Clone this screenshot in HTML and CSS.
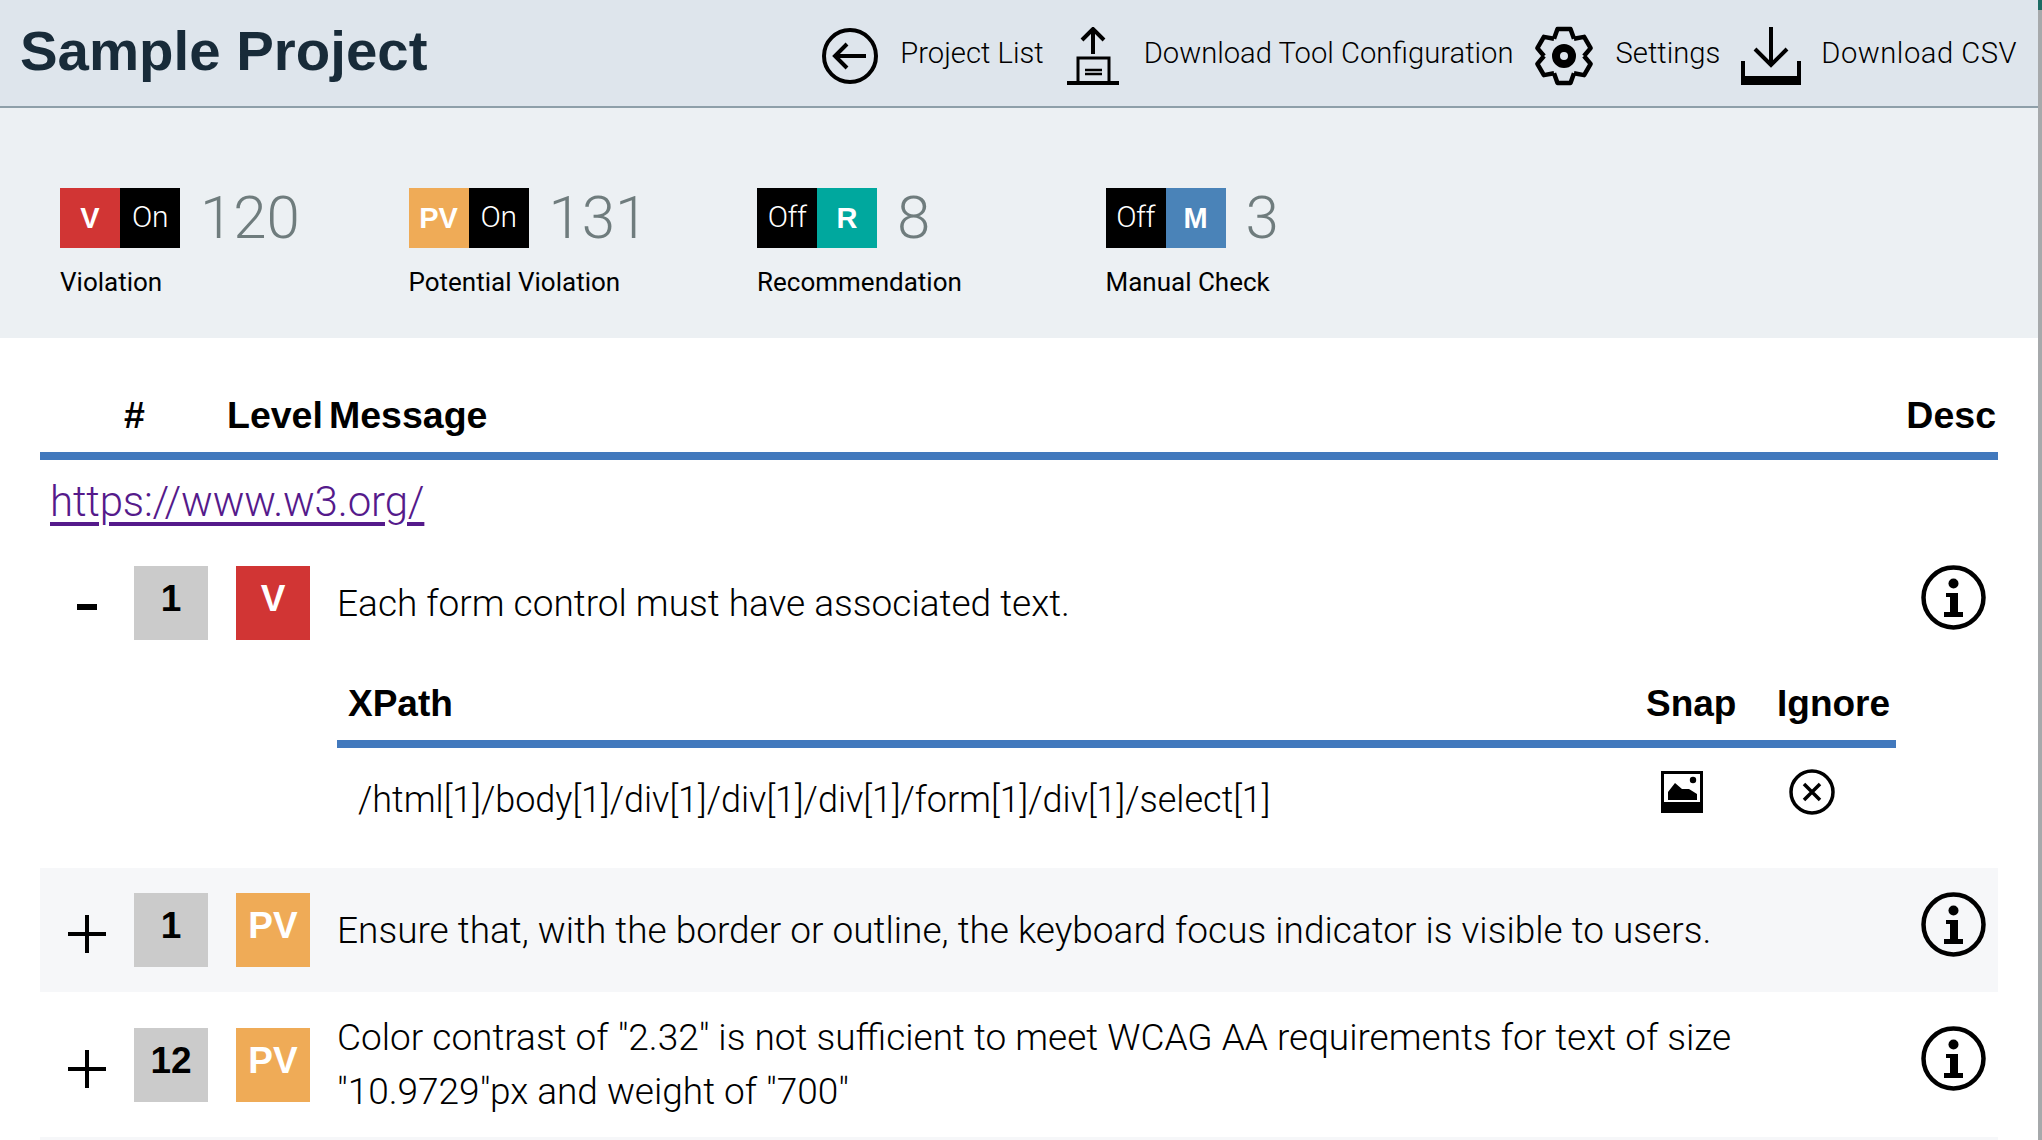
FILE: index.html
```html
<!DOCTYPE html>
<html lang="en">

<head>
    <meta charset="UTF-8">
    <meta name="viewport" content="width=device-width, initial-scale=1.0">
    <title>Sample Project</title>
    <link rel="stylesheet" href="styles.css">
</head>

<body>
    <svg class="icon-defs" aria-hidden="true">
        <symbol id="icon-info" viewBox="0 0 65 65">
            <circle cx="32.5" cy="32.5" r="30" fill="none" stroke="#000" stroke-width="4.5"/>
            <circle cx="32.5" cy="18.5" r="5"/>
            <path d="M25 28h12v19h5v5H23v-5h6V32h-4z"/>
        </symbol>
        <symbol id="icon-plus" viewBox="0 0 38 38">
            <path d="M19 0v38M0 19h38" fill="none" stroke="#000" stroke-width="4"/>
        </symbol>
    </svg>

    <div class="scroll-thumb"></div>

    <div class="page">
        <header class="topbar">
            <h1 class="title">Sample Project</h1>
            <nav class="actions">
                <a class="action action-back">
                    <svg width="56" height="58" viewBox="0 0 56 58" fill="none" stroke="#000" stroke-width="4">
                        <circle cx="28" cy="29" r="26"/>
                        <path d="M44 29H13M25 17 13 29l12 12"/>
                    </svg>
                    <span>Project List</span>
                </a>
                <a class="action action-config">
                    <svg width="52" height="58" viewBox="0 0 52 58" fill="none" stroke="#000">
                        <path d="M26 27V3M15 13 26 2l11 11" stroke-width="4"/>
                        <path d="M11 56V31h31v25" stroke-width="3"/>
                        <path d="M0 56h52" stroke-width="4"/>
                        <path d="M18 43h17M18 47h17" stroke-width="2.5"/>
                    </svg>
                    <span>Download Tool Configuration</span>
                </a>
                <a class="action action-settings">
                    <svg width="60" height="60" viewBox="0 0 60 60" fill="none" stroke="#000" stroke-width="4.5" stroke-linejoin="round">
                        <g transform="translate(30 30)">
                            <polyline id="gear-tooth" points="-10,-17.3 -6.5,-27 6.5,-27 10,-17.3"/>
                            <use href="#gear-tooth" transform="rotate(60)"/>
                            <use href="#gear-tooth" transform="rotate(120)"/>
                            <use href="#gear-tooth" transform="rotate(180)"/>
                            <use href="#gear-tooth" transform="rotate(240)"/>
                            <use href="#gear-tooth" transform="rotate(300)"/>
                            <circle r="8" stroke-width="8"/>
                        </g>
                    </svg>
                    <span>Settings</span>
                </a>
                <a class="action action-csv">
                    <svg width="60" height="58" viewBox="0 0 60 58" fill="none" stroke="#000">
                        <path d="M30 0v38M14 22l16 16 16-16" stroke-width="4"/>
                        <path d="M2 34v20h56V34" stroke-width="4"/>
                        <path d="M0 49h60v9H0z" fill="#000" stroke="none"/>
                    </svg>
                    <span>Download CSV</span>
                </a>
            </nav>
        </header>

        <section class="stats">
            <div class="stat">
                <div class="stat-top">
                    <span class="chip chip-v">V</span><span class="chip chip-toggle">On</span>
                    <span class="stat-count">120</span>
                </div>
                <div class="stat-label">Violation</div>
            </div>
            <div class="stat">
                <div class="stat-top">
                    <span class="chip chip-pv">PV</span><span class="chip chip-toggle">On</span>
                    <span class="stat-count">131</span>
                </div>
                <div class="stat-label">Potential Violation</div>
            </div>
            <div class="stat">
                <div class="stat-top">
                    <span class="chip chip-toggle">Off</span><span class="chip chip-r">R</span>
                    <span class="stat-count">8</span>
                </div>
                <div class="stat-label">Recommendation</div>
            </div>
            <div class="stat">
                <div class="stat-top">
                    <span class="chip chip-toggle">Off</span><span class="chip chip-m">M</span>
                    <span class="stat-count">3</span>
                </div>
                <div class="stat-label">Manual Check</div>
            </div>
        </section>

        <main class="results">
            <div class="results-head">
                <span class="head-num">#</span>
                <span class="head-level">Level</span>
                <span class="head-message">Message</span>
                <span class="head-desc">Desc</span>
            </div>

            <div class="url-row"><a class="url-link" href="#">https://www.w3.org/</a></div>

            <div class="row">
                <button class="toggle">
                    <svg width="20" height="6" viewBox="0 0 20 6"><path d="M0 0h20v6H0z"/></svg>
                </button>
                <div class="box box-count">1</div>
                <div class="box box-v">V</div>
                <div class="message">Each form control must have associated text.</div>
                <svg class="info"><use href="#icon-info"/></svg>
            </div>

            <div class="detail">
                <div class="detail-head">
                    <span class="detail-xpath-head">XPath</span>
                    <span class="detail-snap-head">Snap</span>
                    <span class="detail-ignore-head">Ignore</span>
                </div>
                <div class="detail-row">
                    <span class="detail-xpath">/html[1]/body[1]/div[1]/div[1]/div[1]/form[1]/div[1]/select[1]</span>
                    <span class="detail-snap">
                        <svg width="42" height="42" viewBox="0 0 42 42">
                            <path d="M0 0h42v42H0zM3 3v28h36V3z" fill-rule="evenodd"/>
                            <circle cx="32" cy="9" r="3.2"/>
                            <path d="M7 29V21l7-9 7 6 7 0 8 5v6z"/>
                        </svg>
                    </span>
                    <span class="detail-ignore">
                        <svg width="46" height="46" viewBox="0 0 46 46" fill="none" stroke="#000" stroke-width="3.5">
                            <circle cx="23" cy="23" r="21"/>
                            <path d="M15 15l16 16M31 15 15 31"/>
                        </svg>
                    </span>
                </div>
            </div>

            <div class="row row-alt">
                <button class="toggle"><svg width="38" height="38"><use href="#icon-plus"/></svg></button>
                <div class="box box-count">1</div>
                <div class="box box-pv">PV</div>
                <div class="message">Ensure that, with the border or outline, the keyboard focus indicator is visible to users.</div>
                <svg class="info"><use href="#icon-info"/></svg>
            </div>

            <div class="row">
                <button class="toggle"><svg width="38" height="38"><use href="#icon-plus"/></svg></button>
                <div class="box box-count">12</div>
                <div class="box box-pv">PV</div>
                <div class="message">Color contrast of "2.32" is not sufficient to meet WCAG AA requirements for text of size "10.9729"px and weight of "700"</div>
                <svg class="info"><use href="#icon-info"/></svg>
            </div>

            <div class="row row-alt"></div>
        </main>
    </div>
</body>

</html>
```

FILE: styles.css
```css
body {
    margin: 0;
    height: 1140px;
    overflow: hidden;
    background-color: #fff;
    color: #000;
    font-family: 'Roboto', 'Liberation Sans', sans-serif;
    font-weight: 300;
}

.icon-defs {
    display: none;
}

.page {
    width: 2038px;
    height: 1140px;
    border-right: 4px solid #a6a9ab;
    overflow: hidden;
}

.scroll-thumb {
    position: absolute;
    top: 0;
    right: 0;
    width: 4px;
    height: 10px;
    background-color: #1d6b64;
}

/* Top bar */
.topbar {
    height: 106px;
    border-bottom: 2px solid #8e9fa9;
    background-color: #dee5ec;
    display: flex;
    align-items: center;
    justify-content: space-between;
    padding: 0 21px 0 20px;
}

.title {
    margin: 0;
    padding-bottom: 6px;
    font-family: 'Liberation Sans', sans-serif;
    font-size: 56.4px;
    font-weight: 700;
    color: #182b39;
}

.actions {
    display: flex;
    align-items: center;
}

.action {
    display: flex;
    align-items: center;
    font-size: 29.2px;
}

.action svg {
    margin-top: 5px;
}

.action-back {
    gap: 22px;
}

.action-config {
    gap: 25px;
    margin-left: 23px;
}

.action-settings {
    gap: 22px;
    margin-left: 20px;
}

.action-csv {
    gap: 20px;
    margin-left: 21px;
    letter-spacing: 0.5px;
}

/* Totals */
.stats {
    height: 150px;
    padding: 80px 0 0 60px;
    background-color: #ecf0f3;
    display: flex;
}

.stat {
    width: 348.5px;
}

.stat-top {
    display: flex;
    height: 60px;
}

.chip {
    width: 60px;
    height: 60px;
    display: flex;
    align-items: center;
    justify-content: center;
    color: #fff;
    font-family: 'Liberation Sans', sans-serif;
    font-size: 29px;
    font-weight: 700;
}

.chip-toggle {
    background-color: #000;
    font-family: 'Roboto', sans-serif;
    font-size: 30px;
    font-weight: 300;
    letter-spacing: -0.5px;
    padding-bottom: 4px;
    height: 56px;
}

.chip-v { background-color: #d13534; }
.chip-pv { background-color: #efab57; }
.chip-r { background-color: #00a89e; }
.chip-m { background-color: #4a83b8; }

.stat-count {
    margin-left: 20px;
    font-size: 60px;
    line-height: 60px;
    color: #6f7c7d;
}

.stat-label {
    margin-top: 18px;
    font-size: 26px;
    line-height: 32px;
    font-weight: 400;
}

/* Results table */
.results {
    margin: 0 40px;
}

.results-head {
    height: 122px;
    box-sizing: border-box;
    border-bottom: 8px solid #4279bd;
    display: flex;
    align-items: flex-end;
    padding-bottom: 15px;
    font-family: 'Liberation Sans', sans-serif;
    font-size: 37.5px;
    line-height: 44px;
    font-weight: 700;
}

.head-num {
    margin-left: 84px;
    width: 103px;
}

.head-level {
    width: 102px;
}

.head-message {
    flex: 1;
}

.head-desc {
    margin-right: 2px;
}

.url-row {
    height: 81px;
    padding: 9px 0 0 10px;
    box-sizing: border-box;
    line-height: 66px;
}

.url-link {
    color: #551a8b;
    font-size: 42px;
    letter-spacing: -0.15px;
    text-decoration-thickness: 4px;
    text-underline-offset: 6px;
}

.row {
    display: grid;
    grid-template-columns: 94px 74px 74px 1fr 90px;
    align-items: center;
    box-sizing: border-box;
    min-height: 124px;
    padding: 18px 0;
}

.row-alt {
    background-color: #f6f7f9;
}

.toggle {
    padding: 8px 0 0;
    border: none;
    background: none;
    display: flex;
    justify-content: center;
}

.box {
    width: 74px;
    height: 74px;
    box-sizing: border-box;
    padding-top: 6px;
    text-align: center;
    color: #fff;
    font-family: 'Liberation Sans', sans-serif;
    font-size: 37px;
    line-height: 54px;
    font-weight: 700;
}

.box-count {
    background-color: #cbcbcb;
    color: #000;
}

.box-v {
    background-color: #d13534;
    margin-left: 28px;
}

.box-pv {
    background-color: #efab57;
    margin-left: 28px;
}

.message {
    margin-left: 55px;
    padding: 1px 170px 0 0;
    font-size: 37px;
    line-height: 54px;
}

.info {
    width: 65px;
    height: 65px;
    justify-self: center;
    position: relative;
    top: -6px;
}

/* Expanded row */
.detail {
    margin: 0 102px 0 297px;
    height: 203px;
}

.detail-head {
    height: 83px;
    box-sizing: border-box;
    padding-top: 2px;
    border-bottom: 8px solid #4279bd;
    display: grid;
    grid-template-columns: 1fr 131px 125px;
    align-items: center;
    font-family: 'Liberation Sans', sans-serif;
    font-size: 37px;
    font-weight: 700;
}

.detail-xpath-head {
    padding-left: 11px;
}

.detail-snap-head,
.detail-ignore-head {
    padding-left: 6px;
}

.detail-row {
    display: grid;
    grid-template-columns: 1fr 131px 125px;
    font-size: 36px;
    line-height: 54px;
}

.detail-row svg {
    display: block;
}

.detail-xpath {
    padding: 25px 0 0 21px;
}

.detail-snap {
    padding: 23px 0 0 21px;
}

.detail-ignore {
    padding: 21px 0 0 18px;
}
```
